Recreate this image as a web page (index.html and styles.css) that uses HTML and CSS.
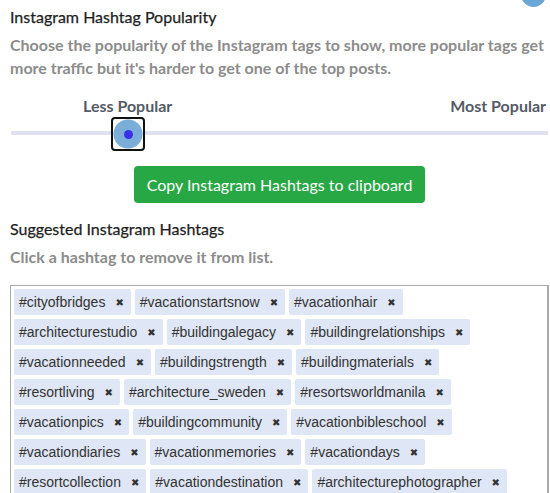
FILE: index.html
```html
<!DOCTYPE html>
<html lang="en">
<head>
    <meta charset="UTF-8">
    <meta name="viewport" content="width=device-width, initial-scale=1.0">
    <title>Instagram Hashtags</title>
    <link rel="stylesheet" href="styles.css">
</head>
<body>
    <div class="avatar"></div>
    <div class="panel">
        <h2 class="titulo">Instagram Hashtag Popularity</h2>
        <p class="ayuda">Choose the popularity of the Instagram tags to show, more popular tags get more traffic but it's harder to get one of the top posts.</p>

        <div class="etiquetas">
            <span>Less Popular</span>
            <span>Most Popular</span>
        </div>
        <div class="deslizador">
            <div class="pista"></div>
            <div class="mango"><div class="punto"></div></div>
        </div>

        <div class="acciones">
            <button type="button" class="copiar">Copy Instagram Hashtags to clipboard</button>
        </div>

        <h2 class="titulo">Suggested Instagram Hashtags</h2>
        <p class="ayuda">Click a hashtag to remove it from list.</p>

        <div class="caja" id="lista"></div>
    </div>

    <script>
        const tags = [
            'cityofbridges', 'vacationstartsnow', 'vacationhair',
            'architecturestudio', 'buildingalegacy', 'buildingrelationships',
            'vacationneeded', 'buildingstrength', 'buildingmaterials',
            'resortliving', 'architecture_sweden', 'resortsworldmanila',
            'vacationpics', 'buildingcommunity', 'vacationbibleschool',
            'vacationdiaries', 'vacationmemories', 'vacationdays',
            'resortcollection', 'vacationdestination', 'architecturephotographer',
            'buildingdesign', 'vacationmode', 'resortlife'
        ];

        const lista = document.getElementById('lista');
        tags.forEach(tag => {
            const item = document.createElement('span');
            item.className = 'tag';
            item.innerHTML = '#' + tag + '<span class="quitar">✖</span>';
            item.addEventListener('click', () => item.remove());
            lista.appendChild(item);
        });
    </script>
</body>
</html>
```

FILE: styles.css
```css
body {
    margin: 0;
    font-family: 'Lato', sans-serif;
    background: #fff;
    color: #222;
}

.avatar {
    position: absolute;
    top: -18px;
    left: 521px;
    width: 25px;
    height: 25px;
    border-radius: 50%;
    background-color: #6aa6d6;
}

.panel {
    padding: 6px 1px 20px 10px;
}

.titulo {
    margin: 0;
    font-size: 16px;
    font-weight: normal;
    line-height: 22px;
    color: #1e1e1e;
    -webkit-text-stroke: 0.25px #1e1e1e;
}

.ayuda {
    margin: 5px 0 0;
    font-size: 16px;
    font-weight: bold;
    line-height: 23px;
    color: #8c8c8c;
}

.etiquetas {
    display: flex;
    justify-content: space-between;
    margin-top: 16px;
    padding-left: 73px;
    padding-right: 3px;
    font-size: 16px;
    font-weight: bold;
    line-height: 22px;
    color: #555a66;
}

.deslizador {
    position: relative;
    height: 34px;
    margin-top: 0;
}

.pista {
    position: absolute;
    top: 14px;
    left: 1px;
    right: 1px;
    height: 4px;
    background-color: #dfe1ee;
}

.mango {
    position: absolute;
    top: 0;
    left: 101px;
    width: 30px;
    height: 30px;
    border: 2px solid #111;
    border-radius: 4px;
    background: radial-gradient(circle, #7aaed8 0 14px, #fff 15px);
    display: flex;
    align-items: center;
    justify-content: center;
}

.punto {
    width: 9px;
    height: 9px;
    border-radius: 50%;
    background-color: #3a30e6;
}

.acciones {
    display: flex;
    justify-content: center;
    margin-top: 15px;
}

.copiar {
    background-color: #28a745;
    color: white;
    border: none;
    border-radius: 4px;
    height: 37px;
    padding: 0 13px;
    font-family: 'Lato', sans-serif;
    font-size: 16px;
    cursor: pointer;
}

.acciones + .titulo {
    margin-top: 15px;
}

.caja {
    display: flex;
    flex-wrap: wrap;
    gap: 4px;
    margin-top: 17px;
    padding: 3px 3px 6px;
    border: 1px solid #a9a9a9;
    border-right-width: 2px;
}

.tag {
    background-color: #dfe6f5;
    color: #333;
    font-family: 'Liberation Sans', Arial, sans-serif;
    font-size: 14px;
    line-height: 26px;
    height: 26px;
    padding: 0 7px 0 5px;
    border-radius: 2px;
    cursor: pointer;
}

.quitar {
    margin-left: 10px;
    font-family: 'DejaVu Sans', sans-serif;
    font-size: 10px;
    color: #333;
    vertical-align: 1px;
}
```
